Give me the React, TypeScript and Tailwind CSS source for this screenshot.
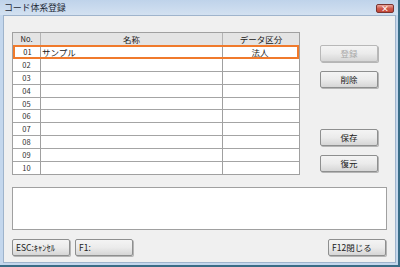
import React from "react";

const rows = [
  { no: "01", name: "サンプル", kind: "法人" },
  { no: "02", name: "", kind: "" },
  { no: "03", name: "", kind: "" },
  { no: "04", name: "", kind: "" },
  { no: "05", name: "", kind: "" },
  { no: "06", name: "", kind: "" },
  { no: "07", name: "", kind: "" },
  { no: "08", name: "", kind: "" },
  { no: "09", name: "", kind: "" },
  { no: "10", name: "", kind: "" },
];

// row heights taken from the screenshot (rows 02..10)
const rowH = ["h-[13px]", "h-[13px]", "h-[13px]", "h-[12px]", "h-[13px]", "h-[13px]", "h-[13px]", "h-[13px]", "h-[12px]"];

const WinButton = ({
  label,
  disabled = false,
  left = false,
  className = "",
}: {
  label: string;
  disabled?: boolean;
  left?: boolean;
  className?: string;
}) => (
  <button
    className={`h-[17px] w-[58px] rounded-[2px] border border-[#8e8f8f] bg-gradient-to-b from-[#f4f4f4] via-[#ebebeb] to-[#d6d6d6] shadow-[1px_1px_0_#b5b5b5] text-[8.5px] leading-none flex items-center ${
      left ? "justify-start pl-[3px]" : "justify-center"
    } ${disabled ? "text-[#a8a8a8] border-[#b8b8b8]" : "text-[#202020]"} ${className}`}
  >
    {label}
  </button>
);

const App = () => {
  return (
    <div
      className="w-[400px] h-[267px] bg-[#c4d7ed] flex flex-col border-r-2 border-b-2 border-r-[#3a6c86] border-b-[#3a6c86] overflow-hidden"
      style={{ fontFamily: '"Noto Sans CJK JP", "Liberation Sans", sans-serif' }}
    >
      {/* Title bar */}
      <div className="h-[15px] flex items-center justify-between pl-[4px] pr-[4px] bg-gradient-to-b from-[#bfd3ea] to-[#d3e1f1] shrink-0">
        <span className="text-[9px] leading-none text-[#1e2a38] tracking-[-0.2px]">コード体系登録</span>
        <div className="w-[18px] h-[9px] mt-[2px] rounded-[2px] border border-[#7a3430] bg-gradient-to-b from-[#e9a89f] via-[#cf5a4c] to-[#c24537] flex items-center justify-center">
          <span className="text-white text-[8px] font-bold leading-none">×</span>
        </div>
      </div>

      {/* Client area */}
      <div className="flex-1 ml-[3px] mr-[2px] mb-[2px] bg-[#f0f0f0] border border-[#9fb4cc] pt-[16px] pl-[8px] pr-[8px] flex flex-col">
        <div className="flex">
          {/* Grid */}
          <div className="w-[288px] border border-[#a0a0a0] bg-white text-[8.5px] text-[#202020]">
            <div className="h-[12px] flex bg-[#e4e4e4] leading-none">
              <div className="w-[28px] flex items-center justify-center border-r border-[#b4b4b4] text-[7.5px]">No.</div>
              <div className="w-[182px] flex items-center justify-center border-r border-[#b4b4b4]">名称</div>
              <div className="flex-1 flex items-center justify-center">データ区分</div>
            </div>
            {/* selected row */}
            <div className="h-[14px] flex border-2 border-[#f07a2c] leading-none">
              <div className="w-[26px] flex items-center justify-center border-r border-[#a0a0a0] text-[7.5px]">{rows[0].no}</div>
              <div className="w-[182px] flex items-center pl-[1px] border-r border-[#a0a0a0]">{rows[0].name}</div>
              <div className="flex-1 flex items-center justify-center">{rows[0].kind}</div>
            </div>
            {rows.slice(1).map((r, i) => (
              <div key={r.no} className={`${rowH[i]} flex border-b border-[#a4a4a4] last:border-b-0 leading-none`}>
                <div className="w-[28px] flex items-center justify-center border-r border-[#a0a0a0] text-[7.5px] text-[#303030]">{r.no}</div>
                <div className="w-[182px] border-r border-[#a0a0a0]">{r.name}</div>
                <div className="flex-1">{r.kind}</div>
              </div>
            ))}
          </div>

          {/* Side buttons */}
          <div className="ml-[20px] pt-[13px] flex flex-col">
            <WinButton label="登録" disabled />
            <WinButton label="削除" className="mt-[9px]" />
            <WinButton label="保存" className="mt-[41px]" />
            <WinButton label="復元" className="mt-[9px]" />
          </div>
        </div>

        {/* Memo box */}
        <div className="mt-[12px] w-[375px] h-[43px] bg-white border border-[#a0a0a0]"></div>

        {/* Bottom buttons */}
        <div className="mt-[9px] flex">
          <WinButton label="ESC:ｷｬﾝｾﾙ" left />
          <WinButton label="F1:" left className="ml-[5px]" />
          <WinButton label="F12閉じる" left className="ml-auto mr-[1px]" />
        </div>
      </div>
    </div>
  );
};

export default App;
